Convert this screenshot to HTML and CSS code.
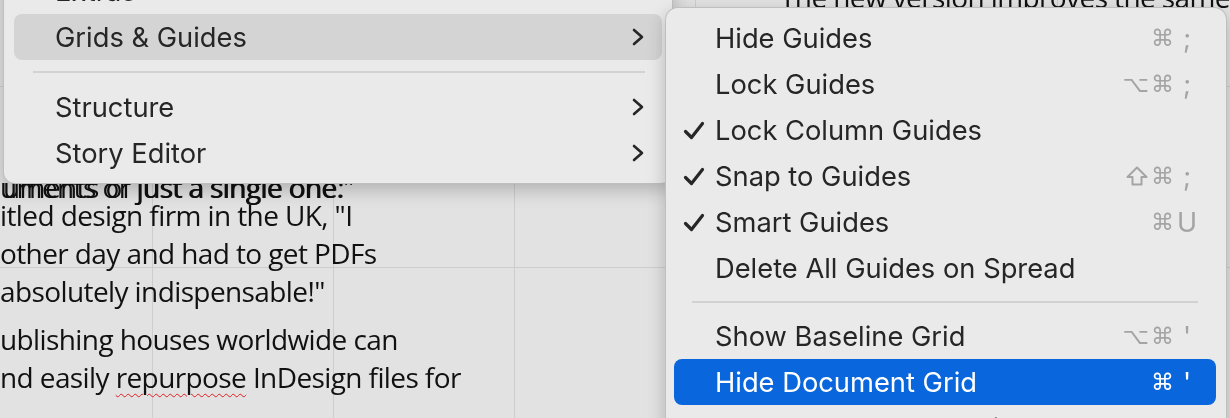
FILE: index.html
```html
<!DOCTYPE html>
<html>
<head>
<meta charset="utf-8">
<link rel="stylesheet" href="styles.css">
</head>
<body>
<div class="doc">
  <div class="frame frame-left">
    <div class="overlap"><span>uments or just a single one."</span><span class="ghost">uments of just a single one:</span></div>
    <p>itled design firm in the UK, "I<br>other day and had to get PDFs<br>absolutely indispensable!"</p>
    <p>ublishing houses worldwide can<br>nd easily <span class="typo">repurpose</span> InDesign files for</p>
  </div>
  <div class="frame frame-top">The new version improves the same</div>
</div>

<div class="menu main-menu">
  <div class="item"><span class="label">Extras</span><svg class="chev" viewBox="0 0 12 18" width="12" height="18"><polyline points="2,2 10,9 2,16"/></svg></div>
  <div class="item hover"><span class="label">Grids &amp; Guides</span><svg class="chev" viewBox="0 0 12 18" width="12" height="18"><polyline points="2,2 10,9 2,16"/></svg></div>
  <div class="sep"></div>
  <div class="item"><span class="label">Structure</span><svg class="chev" viewBox="0 0 12 18" width="12" height="18"><polyline points="2,2 10,9 2,16"/></svg></div>
  <div class="item"><span class="label">Story Editor</span><svg class="chev" viewBox="0 0 12 18" width="12" height="18"><polyline points="2,2 10,9 2,16"/></svg></div>
</div>

<div class="menu sub-menu">
  <div class="row"><span class="check"></span><span class="label">Hide Guides</span><span class="mods">⌘</span><span class="key">;</span></div>
  <div class="row"><span class="check"></span><span class="label">Lock Guides</span><span class="mods">⌥⌘</span><span class="key">;</span></div>
  <div class="row"><span class="check"><svg viewBox="0 0 22 19" width="22" height="19"><path d="M2.5 10.5 L8.5 16.5 L19.5 2.5"/></svg></span><span class="label">Lock Column Guides</span><span class="mods"></span><span class="key"></span></div>
  <div class="row"><span class="check"><svg viewBox="0 0 22 19" width="22" height="19"><path d="M2.5 10.5 L8.5 16.5 L19.5 2.5"/></svg></span><span class="label">Snap to Guides</span><span class="mods"><svg class="shift" viewBox="0 0 22 20" width="22" height="20"><path d="M11 1.5 L20.5 11 L15.5 11 L15.5 18.5 L6.5 18.5 L6.5 11 L1.5 11 Z"/></svg>⌘</span><span class="key">;</span></div>
  <div class="row"><span class="check"><svg viewBox="0 0 22 19" width="22" height="19"><path d="M2.5 10.5 L8.5 16.5 L19.5 2.5"/></svg></span><span class="label">Smart Guides</span><span class="mods">⌘</span><span class="key">U</span></div>
  <div class="row"><span class="check"></span><span class="label">Delete All Guides on Spread</span><span class="mods"></span><span class="key"></span></div>
  <div class="sep"></div>
  <div class="row"><span class="check"></span><span class="label">Show Baseline Grid</span><span class="mods">⌥⌘</span><span class="key">'</span></div>
  <div class="row active"><span class="check"></span><span class="label">Hide Document Grid</span><span class="mods">⌘</span><span class="key">'</span></div>
  <div class="row"><span class="check"></span><span class="label">Snap to Document Grid</span><span class="mods"><svg class="shift" viewBox="0 0 22 20" width="22" height="20"><path d="M11 1.5 L20.5 11 L15.5 11 L15.5 18.5 L6.5 18.5 L6.5 11 L1.5 11 Z"/></svg>⌘</span><span class="key">'</span></div>
</div>
</body>
</html>
```
FILE: styles.css
```css
html, body {
  margin: 0;
  padding: 0;
  width: 1230px;
  height: 418px;
  overflow: hidden;
}
body {
  background: #e2e2e2;
  font-family: Inter, "Liberation Sans", sans-serif;
}
.doc {
  position: fixed;
  inset: 0;
  background-color: #e2e2e2;
  background-image:
    linear-gradient(to right, #cdcdcd 1px, transparent 1px),
    linear-gradient(to bottom, #cdcdcd 1px, transparent 1px);
  background-size: 181px 181px;
  background-position: 152px 86px;
}
.frame {
  position: absolute;
  font-family: "Open Sans", "Noto Sans", sans-serif;
  font-size: 28px;
  color: #111;
  letter-spacing: -0.6px;
  white-space: nowrap;
}
.frame-left {
  left: 0;
  top: 168px;
  line-height: 38px;
}
.frame-left p {
  margin: 0 0 10px 0;
}
.overlap {
  display: grid;
  line-height: 38px;
  margin-bottom: -10px;
}
.overlap span {
  grid-area: 1 / 1;
}
.overlap .ghost {
  margin-left: 3px;
}
.typo {
  text-decoration: underline wavy #e02020;
  text-decoration-thickness: 1px;
  text-underline-offset: 5px;
}
.frame-top {
  left: 780px;
  top: -22px;
  line-height: 38px;
}

.menu {
  position: absolute;
  background: #eaeaea;
  border: 1px solid rgba(0, 0, 0, 0.18);
  box-shadow: 0 6px 18px rgba(0, 0, 0, 0.22);
  color: #262626;
  font-size: 27.3px;
}
.main-menu {
  left: 3px;
  top: -38px;
  width: 668px;
  border-radius: 12px;
  padding: 5px 0 7px;
}
.main-menu .item {
  height: 46px;
  margin: 0 10px;
  padding: 0 18px 0 41px;
  border-radius: 8px;
  display: flex;
  align-items: center;
  justify-content: space-between;
}
.main-menu .item.hover {
  background: #d4d4d4;
}
.chev polyline {
  fill: none;
  stroke: #262626;
  stroke-width: 2.6;
  stroke-linecap: round;
  stroke-linejoin: round;
}
.main-menu .sep {
  height: 2px;
  background: #d2d2d2;
  margin: 11px 27px 11px 29px;
}

.sub-menu {
  left: 665px;
  top: 7px;
  width: 560px;
  height: 460px;
  border-radius: 13px;
  padding-top: 7px;
  z-index: 2;
}
.sub-menu .row {
  height: 46px;
  margin: 0 10px 0 8px;
  padding-right: 18px;
  border-radius: 8px;
  display: grid;
  grid-template-columns: 41px 1fr auto 22px;
  align-items: center;
}
.sub-menu .row.active {
  background: #0a66dc;
  color: #fff;
}
.check {
  padding-left: 9px;
  display: flex;
  align-items: center;
}
.check path {
  fill: none;
  stroke: #262626;
  stroke-width: 3.2;
  stroke-linecap: round;
  stroke-linejoin: round;
}
.mods {
  font-family: "DejaVu Sans", sans-serif;
  font-size: 23px;
  color: #a4a4a4;
  letter-spacing: 2px;
  margin-right: 0;
  display: flex;
  align-items: center;
  justify-content: flex-end;
}
.shift {
  margin-right: 3px;
}
.shift path {
  fill: none;
  stroke: #a4a4a4;
  stroke-width: 2;
  stroke-linejoin: round;
}
.key {
  color: #a4a4a4;
  text-align: center;
  font-size: 27px;
}
.row.active .mods,
.row.active .key {
  color: #fff;
}
.sub-menu .sep {
  height: 2px;
  background: #d2d2d2;
  margin: 10px 28px 10px 26px;
}
```
